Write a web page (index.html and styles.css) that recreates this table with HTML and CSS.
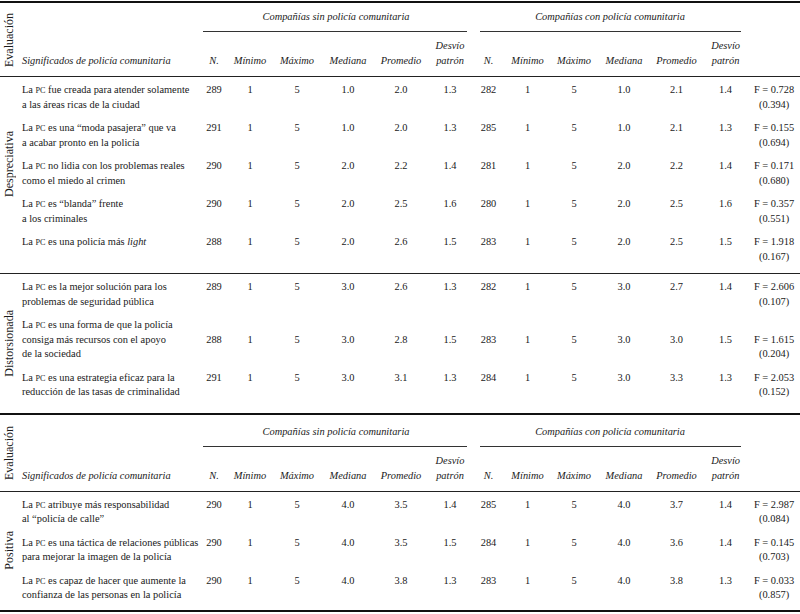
FILE: index.html
```html
<!DOCTYPE html>
<html lang="es">
<head>
<meta charset="utf-8">
<title>Significados de policía comunitaria</title>
<link rel="stylesheet" href="styles.css">
</head>
<body>
<div class="page">
<table class="tbl tbl1">
  <colgroup>
    <col class="w-eval"><col class="w-sig">
    <col class="w28"><col class="w44"><col class="w50"><col class="w52"><col class="w54"><col class="w44">
    <col class="w33"><col class="w45"><col class="w48"><col class="w52"><col class="w53"><col class="w45">
    <col class="w52">
  </colgroup>
  <thead>
    <tr>
      <th class="eval" rowspan="2"><div class="rot">Evaluación</div></th>
      <th class="sig-h" rowspan="2">Significados de policía comunitaria</th>
      <th class="grp grp1" colspan="6"><div class="grp-t">Compañías sin policía comunitaria</div><div class="grp-rule"></div></th>
      <th class="grp grp2" colspan="6"><div class="grp-t">Compañías con policía comunitaria</div><div class="grp-rule"></div></th>
      <th class="fh" rowspan="2"></th>
    </tr>
    <tr class="sub">
      <th>N.</th><th>Mínimo</th><th>Máximo</th><th>Mediana</th><th>Promedio</th><th>Desvío<br>patrón</th>
      <th>N.</th><th>Mínimo</th><th>Máximo</th><th>Mediana</th><th>Promedio</th><th>Desvío<br>patrón</th>
    </tr>
  </thead>
  <tbody class="sec">
    <tr class="first">
      <td class="eval eval-up" rowspan="5"><div class="rot">Despreciativa</div></td>
      <td class="sig">La <span class="sc">pc</span> fue creada para atender solamente<br>a las áreas ricas de la ciudad</td>
      <td class="n">289</td><td class="n">1</td><td class="n">5</td><td class="n">1.0</td><td class="n">2.0</td><td class="n">1.3</td>
      <td class="n">282</td><td class="n">1</td><td class="n">5</td><td class="n">1.0</td><td class="n">2.1</td><td class="n">1.4</td>
      <td class="f">F = 0.728<br>(0.394)</td>
    </tr>
    <tr>
      <td class="sig">La <span class="sc">pc</span> es una “moda pasajera” que va<br>a acabar pronto en la policía</td>
      <td class="n">291</td><td class="n">1</td><td class="n">5</td><td class="n">1.0</td><td class="n">2.0</td><td class="n">1.3</td>
      <td class="n">285</td><td class="n">1</td><td class="n">5</td><td class="n">1.0</td><td class="n">2.1</td><td class="n">1.3</td>
      <td class="f">F = 0.155<br>(0.694)</td>
    </tr>
    <tr>
      <td class="sig">La <span class="sc">pc</span> no lidia con los problemas reales<br>como el miedo al crimen</td>
      <td class="n">290</td><td class="n">1</td><td class="n">5</td><td class="n">2.0</td><td class="n">2.2</td><td class="n">1.4</td>
      <td class="n">281</td><td class="n">1</td><td class="n">5</td><td class="n">2.0</td><td class="n">2.2</td><td class="n">1.4</td>
      <td class="f">F = 0.171<br>(0.680)</td>
    </tr>
    <tr>
      <td class="sig">La <span class="sc">pc</span> es “blanda” frente<br>a los criminales</td>
      <td class="n">290</td><td class="n">1</td><td class="n">5</td><td class="n">2.0</td><td class="n">2.5</td><td class="n">1.6</td>
      <td class="n">280</td><td class="n">1</td><td class="n">5</td><td class="n">2.0</td><td class="n">2.5</td><td class="n">1.6</td>
      <td class="f">F = 0.357<br>(0.551)</td>
    </tr>
    <tr class="last">
      <td class="sig">La <span class="sc">pc</span> es una policía más <i>light</i></td>
      <td class="n">288</td><td class="n">1</td><td class="n">5</td><td class="n">2.0</td><td class="n">2.6</td><td class="n">1.5</td>
      <td class="n">283</td><td class="n">1</td><td class="n">5</td><td class="n">2.0</td><td class="n">2.5</td><td class="n">1.5</td>
      <td class="f">F = 1.918<br>(0.167)</td>
    </tr>
  </tbody>
  <tbody class="sec">
    <tr class="first">
      <td class="eval" rowspan="3"><div class="rot">Distorsionada</div></td>
      <td class="sig">La <span class="sc">pc</span> es la mejor solución para los<br>problemas de seguridad pública</td>
      <td class="n">289</td><td class="n">1</td><td class="n">5</td><td class="n">3.0</td><td class="n">2.6</td><td class="n">1.3</td>
      <td class="n">282</td><td class="n">1</td><td class="n">5</td><td class="n">3.0</td><td class="n">2.7</td><td class="n">1.4</td>
      <td class="f">F = 2.606<br>(0.107)</td>
    </tr>
    <tr>
      <td class="sig">La <span class="sc">pc</span> es una forma de que la policía<br>consiga más recursos con el apoyo<br>de la sociedad</td>
      <td class="n">288</td><td class="n">1</td><td class="n">5</td><td class="n">3.0</td><td class="n">2.8</td><td class="n">1.5</td>
      <td class="n">283</td><td class="n">1</td><td class="n">5</td><td class="n">3.0</td><td class="n">3.0</td><td class="n">1.5</td>
      <td class="f">F = 1.615<br>(0.204)</td>
    </tr>
    <tr class="last last-wide">
      <td class="sig">La <span class="sc">pc</span> es una estrategia eficaz para la<br>reducción de las tasas de criminalidad</td>
      <td class="n">291</td><td class="n">1</td><td class="n">5</td><td class="n">3.0</td><td class="n">3.1</td><td class="n">1.3</td>
      <td class="n">284</td><td class="n">1</td><td class="n">5</td><td class="n">3.0</td><td class="n">3.3</td><td class="n">1.3</td>
      <td class="f">F = 2.053<br>(0.152)</td>
    </tr>
  </tbody>
</table>

<table class="tbl tbl2">
  <colgroup>
    <col class="w-eval"><col class="w-sig">
    <col class="w28"><col class="w44"><col class="w50"><col class="w52"><col class="w54"><col class="w44">
    <col class="w33"><col class="w45"><col class="w48"><col class="w52"><col class="w53"><col class="w45">
    <col class="w52">
  </colgroup>
  <thead>
    <tr>
      <th class="eval" rowspan="2"><div class="rot">Evaluación</div></th>
      <th class="sig-h" rowspan="2">Significados de policía comunitaria</th>
      <th class="grp grp1" colspan="6"><div class="grp-t">Compañías sin policía comunitaria</div><div class="grp-rule"></div></th>
      <th class="grp grp2" colspan="6"><div class="grp-t">Compañías con policía comunitaria</div><div class="grp-rule"></div></th>
      <th class="fh" rowspan="2"></th>
    </tr>
    <tr class="sub">
      <th>N.</th><th>Mínimo</th><th>Máximo</th><th>Mediana</th><th>Promedio</th><th>Desvío<br>patrón</th>
      <th>N.</th><th>Mínimo</th><th>Máximo</th><th>Mediana</th><th>Promedio</th><th>Desvío<br>patrón</th>
    </tr>
  </thead>
  <tbody class="sec">
    <tr class="first">
      <td class="eval" rowspan="3"><div class="rot">Positiva</div></td>
      <td class="sig">La <span class="sc">pc</span> atribuye más responsabilidad<br>al “policía de calle”</td>
      <td class="n">290</td><td class="n">1</td><td class="n">5</td><td class="n">4.0</td><td class="n">3.5</td><td class="n">1.4</td>
      <td class="n">285</td><td class="n">1</td><td class="n">5</td><td class="n">4.0</td><td class="n">3.7</td><td class="n">1.4</td>
      <td class="f">F = 2.987<br>(0.084)</td>
    </tr>
    <tr>
      <td class="sig">La <span class="sc">pc</span> es una táctica de relaciones públicas<br>para mejorar la imagen de la policía</td>
      <td class="n">290</td><td class="n">1</td><td class="n">5</td><td class="n">4.0</td><td class="n">3.5</td><td class="n">1.5</td>
      <td class="n">284</td><td class="n">1</td><td class="n">5</td><td class="n">4.0</td><td class="n">3.6</td><td class="n">1.4</td>
      <td class="f">F = 0.145<br>(0.703)</td>
    </tr>
    <tr class="last last-narrow">
      <td class="sig">La <span class="sc">pc</span> es capaz de hacer que aumente la<br>confianza de las personas en la policía</td>
      <td class="n">290</td><td class="n">1</td><td class="n">5</td><td class="n">4.0</td><td class="n">3.8</td><td class="n">1.3</td>
      <td class="n">283</td><td class="n">1</td><td class="n">5</td><td class="n">4.0</td><td class="n">3.8</td><td class="n">1.3</td>
      <td class="f">F = 0.033<br>(0.857)</td>
    </tr>
  </tbody>
</table>
</div>
</body>
</html>
```

FILE: styles.css
```css
html, body {
  margin: 0;
  padding: 0;
  background: #ffffff;
}

.page {
  width: 800px;
  padding-top: 1px;
  font-family: "Liberation Serif", "Times New Roman", serif;
  font-size: 10.4px;
  line-height: 14.5px;
  color: #1a1a1a;
}

.tbl {
  width: 800px;
  table-layout: fixed;
  border-collapse: collapse;
}

.tbl1 {
  border-top: 2px solid #111;
  border-bottom: 2px solid #111;
}

.tbl2 {
  border-bottom: 2px solid #111;
}

.w-eval { width: 18px; }
.w-sig { width: 182px; }
.w28 { width: 28px; }
.w33 { width: 33px; }
.w44 { width: 44px; }
.w45 { width: 45px; }
.w48 { width: 48px; }
.w50 { width: 50px; }
.w52 { width: 52px; }
.w53 { width: 53px; }
.w54 { width: 54px; }

th, td {
  padding: 0;
  font-weight: normal;
}

thead {
  border-bottom: 1px solid #222;
}

thead th {
  font-style: italic;
  text-align: center;
  vertical-align: bottom;
  line-height: 15px;
}

th.eval {
  font-style: normal;
  vertical-align: middle;
}

th.sig-h {
  text-align: left;
  white-space: nowrap;
  padding: 0 0 8px 4px;
}

.grp {
  vertical-align: top;
  padding-top: 7px;
}

.tbl2 .grp {
  padding-top: 10px;
}

.grp-t {
  line-height: 14px;
  white-space: nowrap;
}

.grp-rule {
  margin-top: 7px;
  border-bottom: 1px solid #333;
}

.grp1 .grp-rule { margin-left: 3px; margin-right: 5px; }
.grp2 .grp-rule { margin-left: 8px; margin-right: 7px; }

.sub th {
  padding: 6px 0 8px;
}

.sec + .sec {
  border-top: 1px solid #222;
}

.eval {
  vertical-align: middle;
  text-align: center;
}

td.eval {
  padding: 0;
}

td.eval-up {
  padding-bottom: 22px;
}

.rot {
  writing-mode: vertical-rl;
  transform: rotate(180deg);
  margin: 0 auto;
  white-space: nowrap;
  font-size: 12px;
  line-height: 14px;
}

td.sig {
  vertical-align: top;
  white-space: nowrap;
  padding: 5px 0 4px 4px;
}

td.n {
  text-align: center;
  vertical-align: bottom;
  padding: 5px 0 18.5px;
}

td.f {
  text-align: center;
  vertical-align: bottom;
  padding: 5px 0 4px;
  white-space: nowrap;
}

tr.first td.sig,
tr.first td.n,
tr.first td.f {
  padding-top: 6px;
}

tr.last td.sig,
tr.last td.f { padding-bottom: 9px; }
tr.last td.n { padding-bottom: 23.5px; }

tr.last-wide td.sig,
tr.last-wide td.f { padding-bottom: 13px; }
tr.last-wide td.n { padding-bottom: 27.5px; }

tr.last-narrow td.sig,
tr.last-narrow td.f { padding-bottom: 7px; }
tr.last-narrow td.n { padding-bottom: 21.5px; }

.sc {
  text-transform: uppercase;
  font-size: 0.78em;
  line-height: 1;
}
```
